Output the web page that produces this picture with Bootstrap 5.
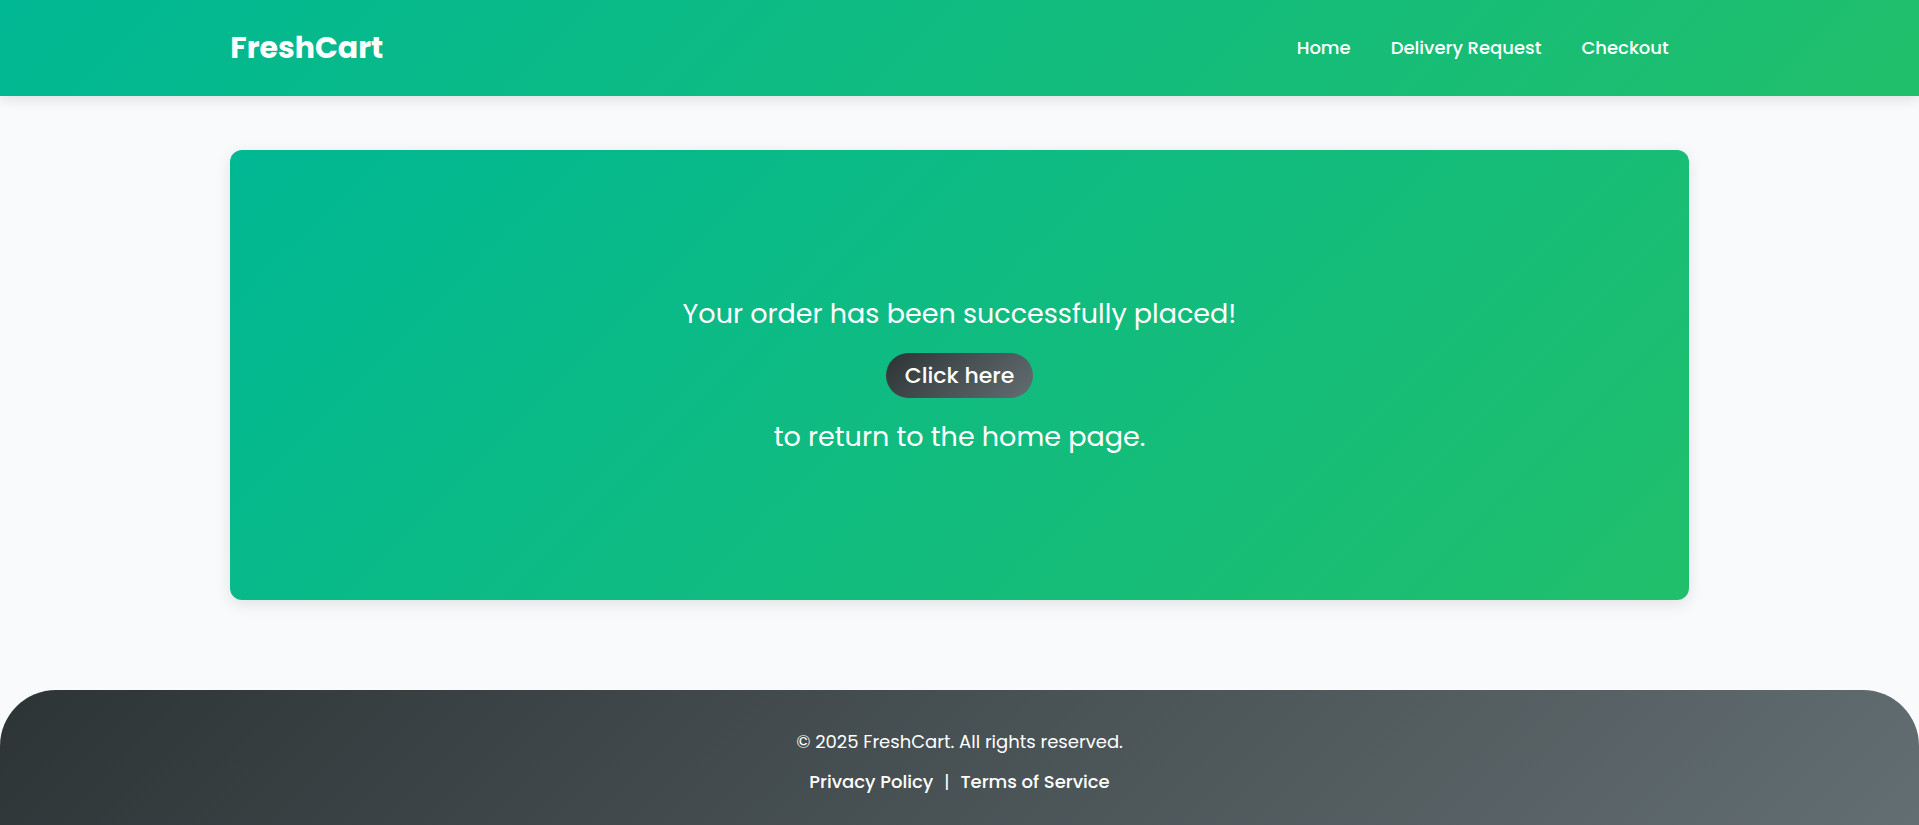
<!DOCTYPE html>
<html lang="en">
<head>
<meta charset="utf-8">
<meta name="viewport" content="width=device-width, initial-scale=1">
<title>FreshCart</title>
<link href="https://cdn.jsdelivr.net/npm/bootstrap@5.3.0/dist/css/bootstrap.min.css" rel="stylesheet">
<style>
  body { font-family: Poppins, Inter, sans-serif; background: #f9fafc; }
  .shell { width: 76%; }
  .fresh-fill { background: linear-gradient(135deg, #00b894, #20bf6b); }
  .slate-fill { background: linear-gradient(135deg, #2d3436, #636e72); }
  .site-header { min-height: 96px; box-shadow: 0 4px 12px rgba(0, 0, 0, .1); }
  .navbar-brand { font-size: 30px; line-height: 48px; font-weight: 700; }
  .site-nav { gap: 40px; padding-right: 20px; }
  .site-nav .nav-link { font-size: 18px; line-height: 28px; font-weight: 500; }
  .confirmation { min-height: 450px; margin-top: 54px; margin-bottom: 90px; border-radius: 12px; box-shadow: 0 4px 16px rgba(0, 0, 0, .1); font-size: 27px; line-height: 42px; }
  .confirmation .stack { gap: 18px; }
  .home-btn { font-size: 22px; line-height: 33px; font-weight: 500; padding: 6px 19px; border: 0; }
  .site-footer { border-radius: 56px 56px 0 0; padding: 36px 16px 27px; font-size: 18px; line-height: 32px; }
  .site-footer a { font-weight: 500; }
  .legal-links { gap: 11px; }
</style>
</head>
<body class="min-vh-100 d-flex flex-column">
  <header class="site-header fresh-fill d-flex">
    <div class="shell mx-auto d-flex flex-wrap align-items-center justify-content-between">
      <a class="navbar-brand text-white m-0 p-0" href="#">FreshCart</a>
      <nav class="site-nav nav" aria-label="Main">
        <a class="nav-link text-white p-0" href="#">Home</a>
        <a class="nav-link text-white p-0" href="#">Delivery Request</a>
        <a class="nav-link text-white p-0" href="#">Checkout</a>
      </nav>
    </div>
  </header>

  <main class="shell mx-auto flex-grow-1">
    <section class="confirmation fresh-fill text-white text-center d-flex align-items-center justify-content-center">
      <div class="stack d-flex flex-column align-items-center">
        <p class="m-0">Your order has been successfully placed!</p>
        <button type="button" class="home-btn slate-fill btn text-white rounded-pill">Click here</button>
        <p class="m-0">to return to the home page.</p>
      </div>
    </section>
  </main>

  <footer class="site-footer slate-fill text-white text-center">
    <p class="mb-2">© 2025 FreshCart. All rights reserved.</p>
    <div class="legal-links d-flex justify-content-center">
      <a class="text-white text-decoration-none" href="#">Privacy Policy</a>
      <span>|</span>
      <a class="text-white text-decoration-none" href="#">Terms of Service</a>
    </div>
  </footer>
<script src="https://cdn.jsdelivr.net/npm/bootstrap@5.3.0/dist/js/bootstrap.bundle.min.js"></script>
</body>
</html>
